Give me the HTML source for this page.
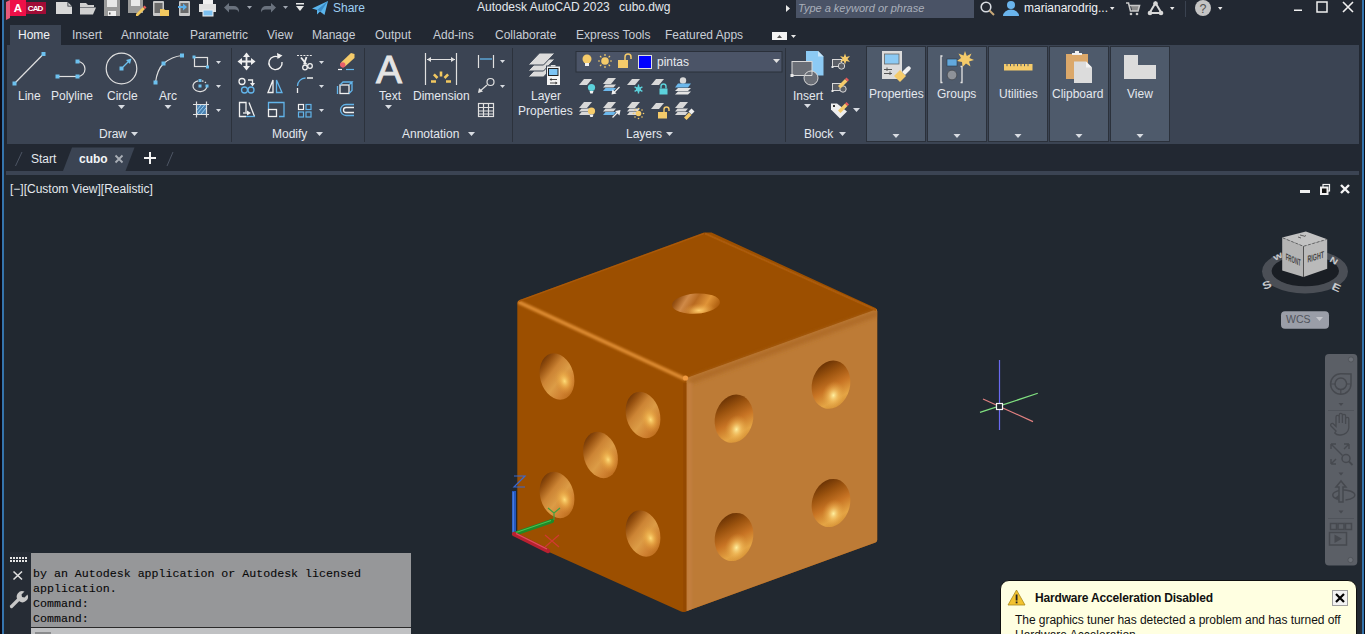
<!DOCTYPE html>
<html><head><meta charset="utf-8">
<style>
*{margin:0;padding:0;box-sizing:border-box}
html,body{width:1365px;height:634px;overflow:hidden;background:#212830;font-family:"Liberation Sans",sans-serif;color:#dfe3e8}
.a{position:absolute}
.t{position:absolute;white-space:pre;font-size:12px;line-height:14px;color:#e4e8ee}
.tab{color:#c9ced6}
svg{position:absolute;overflow:visible}
.mp{position:absolute;top:46px;width:60px;height:96px;background:#4e5a6b;border:1px solid #2b313b}
.tri{position:absolute;width:0;height:0;border-left:3.5px solid transparent;border-right:3.5px solid transparent;border-top:4px solid #d8dce2}
</style></head><body>
<!-- frame -->
<div class="a" style="left:0;top:0;width:1365px;height:175px;background:#222832"></div>
<div class="a" style="left:0;top:0;width:2px;height:634px;background:#0b0a14"></div>
<div class="a" style="left:2px;top:0;width:2px;height:634px;background:#3574ac"></div>
<div class="a" style="left:1360px;top:0;width:2px;height:634px;background:#262a33"></div>
<div class="a" style="left:1362px;top:0;width:2px;height:634px;background:#3574ac"></div>
<div class="a" style="left:1364px;top:0;width:1px;height:634px;background:#0b0a14"></div>

<!-- title bar -->
<div class="t" style="left:477px;top:0px">Autodesk AutoCAD 2023</div>
<div class="t" style="left:619px;top:0px">cubo.dwg</div>
<div class="t" style="left:333px;top:1px;color:#9fd0f4">Share</div>
<div class="a" style="left:796px;top:0;width:178px;height:18px;background:#4a5366"></div>
<div class="t" style="left:798px;top:1px;font-style:italic;color:#a9afba;font-size:11px">Type a keyword or phrase</div>
<div class="t" style="left:1024px;top:1px;color:#f0f2f5">marianarodrig...</div>


<!-- title bar icons -->
<svg width="1365" height="22" style="left:0;top:0">
  <!-- logo -->
  <polygon points="6,2 10,0 10,18 6,20" fill="#e8597a"/>
  <rect x="10" y="0" width="16" height="16" fill="#ee1048"/>
  <rect x="26" y="2" width="20" height="12" fill="#a00c36"/>
  <text x="13.8" y="12" font-family="Liberation Sans" font-weight="bold" font-size="11.5" fill="#fff">A</text>
  <text x="27.8" y="11" font-family="Liberation Sans" font-weight="bold" font-size="8" fill="#fff" textLength="15.5">CAD</text>
  <!-- new -->
  <path d="M56 2 h11.5 l4.5 4.5 v7.5 h-16z" fill="#d8d8d8"/>
  <path d="M67.5 2 v4.5 h4.5" fill="#222832"/>
  <path d="M68.3 2.8 l3 3 h-3z" fill="#d8d8d8"/>
  <!-- open -->
  <path d="M80 3 h6 l2 2 h6 v2 h-14z" fill="#d0d0d0"/>
  <path d="M80 7.5 h16 l-3 7 h-13z" fill="#d0d0d0"/>
  <!-- save -->
  <path d="M104 0 h16 v16 h-16z" fill="#9a9a9a"/>
  <rect x="107" y="0" width="10" height="7" fill="#e8e8e8"/>
  <rect x="108" y="11" width="8" height="5" fill="#f0f0f0"/>
  <rect x="109" y="12.5" width="1.5" height="2" fill="#555"/>
  <!-- save as -->
  <path d="M128 0 h15 v13 h-15z" fill="#9a9a9a"/>
  <rect x="131" y="0" width="9" height="6" fill="#e8e8e8"/>
  <path d="M136 14 l7 -7 l2 2 l-7 7 h-2z" fill="#f2c860"/>
  <path d="M143 7 l1.5 -1.5 l2 2 l-1.5 1.5z" fill="#e85a5a"/>
  <!-- open from mobile -->
  <rect x="153" y="1" width="11" height="15" rx="1" fill="#c8c8c8"/>
  <rect x="154.5" y="3" width="8" height="10" fill="#6a6a6a"/>
  <path d="M160 9 h4 l1 1 h4 v6 h-9z" fill="#f2c860"/>
  <!-- save to mobile -->
  <rect x="179" y="1" width="11" height="15" rx="1" fill="#c8c8c8"/>
  <rect x="180.5" y="3" width="8" height="10" fill="#6a6a6a"/>
  <path d="M178 6 h5 v-2.5 l4 3.5 l-4 3.5 v-2.5 h-5z" fill="#5ab0ec"/>
  <!-- print -->
  <rect x="203" y="0" width="10" height="4" fill="#f0f0f0"/>
  <rect x="199" y="4" width="17" height="8" fill="#e0e0e0"/>
  <rect x="203" y="10" width="10" height="6" fill="#7cc0f0" stroke="#f0f0f0" stroke-width="1"/>
  <!-- undo/redo -->
  <path d="M224 7.5 l5 -4.5 v3 h5 a5 5 0 0 1 5 5 v1.5 a4.5 4.5 0 0 0 -4.5 -3 h-5.5 v3z" fill="#6a727e"/>
  <path d="M276 7.5 l-5 -4.5 v3 h-5 a5 5 0 0 0 -5 5 v1.5 a4.5 4.5 0 0 1 4.5 -3 h5.5 v3z" fill="#6a727e"/>
  <polygon points="247,6 252,6 249.5,9" fill="#a0a6b0"/>
  <polygon points="283,6 288,6 285.5,9" fill="#a0a6b0"/>
  <rect x="296" y="3" width="8" height="1.5" fill="#e8e8e8"/>
  <polygon points="296,6 304,6 300,11" fill="#e8e8e8"/>
  <!-- share plane -->
  <path d="M312 8.5 l16 -7.5 l-3.5 14 l-4.5 -3.5 l-3 3 v-4.5z" fill="#5ab4ec"/>
  <path d="M317 10 l11 -9 l-7 10.5" fill="#3a8cc8"/>
  <!-- search arrow -->
  <polygon points="786,5 786,12 790,8.5" fill="#e8e8e8"/>
  <!-- search -->
  <circle cx="986" cy="7" r="4.8" fill="none" stroke="#d8dce2" stroke-width="1.6"/>
  <line x1="989.5" y1="10.5" x2="994" y2="15" stroke="#c8a878" stroke-width="2"/>
  <!-- person -->
  <circle cx="1011" cy="5" r="4" fill="#6ab4ec"/>
  <path d="M1003 16 a8 6.5 0 0 1 16 0z" fill="#6ab4ec"/>
  <polygon points="1110,7 1114.5,7 1112.2,10" fill="#e8e8e8"/>
  <!-- cart -->
  <path d="M1131 6 h8 l-1.5 5 h-5.5z" fill="#8a8a8a"/><path d="M1126 3 h2.5 l2 8 h7.5 l1.5 -5.5 h-10" fill="none" stroke="#c8c8c8" stroke-width="1.6"/>
  <circle cx="1131" cy="14" r="1.3" fill="#c8c8c8"/><circle cx="1137" cy="14" r="1.3" fill="#c8c8c8"/>
  <!-- autodesk A -->
  <path d="M1155.5 3 l-6 10 h12z" fill="none" stroke="#d8d8d8" stroke-width="2"/>
  <circle cx="1155.5" cy="3.5" r="2.3" fill="#d8d8d8"/><circle cx="1150" cy="13" r="2.3" fill="#d8d8d8"/><circle cx="1161" cy="13" r="2.3" fill="#d8d8d8"/>
  <polygon points="1170,7 1174.5,7 1172.2,10" fill="#e8e8e8"/>
  <line x1="1185.5" y1="1" x2="1185.5" y2="17" stroke="#3a4250" stroke-width="1"/>
  <!-- help -->
  <circle cx="1203" cy="8" r="8" fill="#c4c4c4"/>
  <text x="1199.5" y="12.8" font-family="Liberation Sans" font-size="12.5" fill="#505050">?</text>
  <polygon points="1218,7 1222.5,7 1220.2,10" fill="#e8e8e8"/>
  <!-- window buttons -->
  <rect x="1294" y="9.5" width="8" height="1.5" fill="#f0f0f0"/>
  <rect x="1317" y="2" width="10" height="10" fill="none" stroke="#f0f0f0" stroke-width="1.5"/>
  <path d="M1343 2 l10 10 M1353 2 l-10 10" stroke="#f0f0f0" stroke-width="1.6"/>
</svg>

<!-- ribbon tabs -->
<div class="a" style="left:10px;top:25px;width:51px;height:20px;background:#3b4453"></div>
<div class="t" style="left:18px;top:28px;color:#f2f4f7">Home</div>
<div class="t tab" style="left:72px;top:28px">Insert</div>
<div class="t tab" style="left:121px;top:28px">Annotate</div>
<div class="t tab" style="left:190px;top:28px">Parametric</div>
<div class="t tab" style="left:267px;top:28px">View</div>
<div class="t tab" style="left:312px;top:28px">Manage</div>
<div class="t tab" style="left:375px;top:28px">Output</div>
<div class="t tab" style="left:433px;top:28px">Add-ins</div>
<div class="t tab" style="left:495px;top:28px">Collaborate</div>
<div class="t tab" style="left:576px;top:28px">Express Tools</div>
<div class="t tab" style="left:665px;top:28px">Featured Apps</div>

<!-- ribbon panel bg -->
<div class="a" style="left:7px;top:45px;width:1352px;height:99px;background:#3b4453"></div>
<div class="a" style="left:772px;top:32px;width:15px;height:8px;background:#f4f4f4"></div>
<svg width="30" height="10" style="left:772px;top:32px"><polygon points="5,6 10,6 7.5,3" fill="#555"/><polygon points="19,3 24,3 21.5,6" fill="#e8e8e8"/></svg>
<div class="a" style="left:231px;top:48px;width:1px;height:94px;background:#2c323c"></div>
<div class="a" style="left:364px;top:48px;width:1px;height:94px;background:#2c323c"></div>
<div class="a" style="left:512px;top:48px;width:1px;height:94px;background:#2c323c"></div>
<div class="a" style="left:785px;top:48px;width:1px;height:94px;background:#2c323c"></div>

<!-- Draw panel labels -->
<div class="t" style="left:18px;top:89px">Line</div>
<div class="t" style="left:51px;top:89px">Polyline</div>
<div class="t" style="left:107px;top:89px">Circle</div>
<div class="t" style="left:159px;top:89px">Arc</div>
<div class="t" style="left:99px;top:127px">Draw</div>
<div class="t" style="left:272px;top:127px">Modify</div>
<div class="t" style="left:379px;top:89px">Text</div>
<div class="t" style="left:413px;top:89px">Dimension</div>
<div class="t" style="left:402px;top:127px">Annotation</div>
<div class="t" style="left:531px;top:89px">Layer</div>
<div class="t" style="left:518px;top:104px">Properties</div>
<div class="t" style="left:626px;top:127px">Layers</div>
<div class="t" style="left:793px;top:89px">Insert</div>
<div class="t" style="left:804px;top:127px">Block</div>

<!-- minimized panels -->
<div class="mp" style="left:866px"></div>
<div class="mp" style="left:927px"></div>
<div class="mp" style="left:988px"></div>
<div class="mp" style="left:1049px"></div>
<div class="mp" style="left:1110px"></div>
<div class="t" style="left:869px;top:87px">Properties</div>
<div class="t" style="left:937px;top:87px">Groups</div>
<div class="t" style="left:999px;top:87px">Utilities</div>
<div class="t" style="left:1052px;top:87px">Clipboard</div>
<div class="t" style="left:1127px;top:87px">View</div>


<!-- ribbon icons -->
<svg width="1365" height="150" style="left:0;top:0">
 <g fill="#6cc0ee">
  <!-- Line -->
  <line x1="14.5" y1="83.5" x2="43.5" y2="54" stroke="#e0e0e0" stroke-width="1.2"/>
  <rect x="12.5" y="81.5" width="4" height="4"/><rect x="41.5" y="52" width="4" height="4"/>
  <!-- Polyline -->
  <line x1="57.5" y1="76.5" x2="77.5" y2="76.5" stroke="#e0e0e0" stroke-width="1.2"/>
  <path d="M77.5 61.5 a7.5 7.5 0 0 1 0 15" fill="none" stroke="#e0e0e0" stroke-width="1.2"/>
  <rect x="55.5" y="74.5" width="4" height="4"/><rect x="75.5" y="74.5" width="4" height="4"/><rect x="75.5" y="59.5" width="4" height="4"/>
  <!-- Circle -->
  <circle cx="121.5" cy="68.5" r="15.3" fill="none" stroke="#e0e0e0" stroke-width="1.2"/>
  <rect x="119.5" y="66.5" width="4" height="4"/>
  <line x1="123" y1="67" x2="129.5" y2="60.5" stroke="#6cc0ee" stroke-width="1.3"/>
  <polygon points="131.5,58.5 126,60 130,64"/>
  <!-- Arc -->
  <path d="M155.5 82.5 Q157 70 163.5 63.5 Q172 56.5 182 55.5" fill="none" stroke="#e0e0e0" stroke-width="1.2"/>
  <rect x="153.5" y="80.5" width="4" height="4"/><rect x="161.5" y="61.5" width="4" height="4"/><rect x="180" y="53.5" width="4" height="4"/>
  <!-- rect -->
  <rect x="194.5" y="57.5" width="13" height="9" fill="none" stroke="#e0e0e0" stroke-width="1.2"/>
  <rect x="192.5" y="55.5" width="3" height="3"/><rect x="206" y="65.5" width="3" height="3"/>
  <!-- ellipse -->
  <path d="M198 80.8 A7 5.5 0 1 0 207 86" fill="none" stroke="#e0e0e0" stroke-width="1.2"/>
  <path d="M202 80.8 A7 5.5 0 0 1 206 83" fill="none" stroke="#e0e0e0" stroke-width="1.2" stroke-dasharray="1.5 1.5"/>
  <rect x="198.5" y="79" width="3" height="3"/><rect x="198.5" y="84.5" width="3" height="3"/><rect x="205.5" y="84.5" width="3" height="3"/>
  <!-- hatch -->
  <rect x="196.5" y="104.5" width="10" height="10" fill="#4a80b0"/>
  <path d="M197 110 l4 -5 M197 114 l8 -9.5 M201 114 l5 -6" stroke="#9ad0f0" stroke-width="1"/>
  <path d="M193 104.5 h16 M193 114.5 h16 M196.5 101.5 v16 M206.5 101.5 v16" stroke="#e0e0e0" stroke-width="1.2"/>
 </g>
 <g fill="#d8dce2">
  <polygon points="216,61 221,61 218.5,64"/><polygon points="216,85 221,85 218.5,88"/><polygon points="216,109 221,109 218.5,112"/>
  <polygon points="118,105 125,105 121.5,109"/><polygon points="164.5,105 171.5,105 168,109"/>
  <polygon points="131,132 138,132 134.5,136"/>
 </g>
 <!-- Modify icons -->
 <!-- move -->
 <path d="M246.5 55 v13 M240 61.5 h13" stroke="#f0f0f0" stroke-width="1.8"/>
 <g fill="#f0f0f0">
  <polygon points="246.5,52.5 243,57 250,57"/><polygon points="246.5,70.5 243,66 250,66"/>
  <polygon points="237.5,61.5 242,58 242,65"/><polygon points="255.5,61.5 251,58 251,65"/>
 </g>
 <!-- rotate -->
 <path d="M279.5 57.8 A6.6 6.6 0 1 0 282 62" fill="none" stroke="#f0f0f0" stroke-width="1.4"/>
 <polygon points="282.5,55.5 277,53 277.5,59" fill="#f0f0f0"/>
 <!-- copy -->
 <circle cx="242" cy="81.5" r="3" fill="none" stroke="#f0f0f0" stroke-width="1.3"/>
 <path d="M248 80 h4.5 v3" fill="none" stroke="#f0f0f0" stroke-width="1.3"/>
 <polygon points="250,83 255,83 252.5,86.5" fill="#f0f0f0"/>
 <circle cx="244.5" cy="90" r="3" fill="none" stroke="#62b4ea" stroke-width="1.3"/>
 <circle cx="251" cy="90" r="3" fill="none" stroke="#62b4ea" stroke-width="1.3"/>
 <!-- mirror -->
 <path d="M268 92.5 l5 -12.5 v12.5z" fill="none" stroke="#f0f0f0" stroke-width="1.3" stroke-linejoin="miter"/>
 <path d="M276.5 80 l5.5 12.5 h-5.5z" fill="none" stroke="#62b4ea" stroke-width="1.3"/>
 <!-- stretch -->
 <path d="M246 116.5 h-6.5 v-14 h6.5 v10" fill="none" stroke="#f0f0f0" stroke-width="1.3"/>
 <path d="M249 102.5 l5.5 14" fill="none" stroke="#f0f0f0" stroke-width="1.3"/>
 <path d="M246 116.5 h9" stroke="#62b4ea" stroke-width="1.3"/>
 <path d="M243 113 h5" stroke="#f0f0f0" stroke-width="1.3"/>
 <polygon points="251,113 247,110.5 247,115.5" fill="#f0f0f0"/>
 <!-- scale -->
 <path d="M268.5 109 v-6.5 h15.5 v14 h-5" fill="none" stroke="#62b4ea" stroke-width="1.3"/>
 <rect x="268.5" y="109.5" width="8" height="7" fill="none" stroke="#f0f0f0" stroke-width="1.3"/>
 <!-- trim -->
 <path d="M297 55.5 h16" stroke="#e8e8e8" stroke-width="1.2" stroke-dasharray="2 1.2"/>
 <path d="M301 57.5 l5.5 7 M306.5 57 l-2.5 7.5" stroke="#f0f0f0" stroke-width="1.8"/>
 <circle cx="305" cy="67.5" r="2.3" fill="none" stroke="#f0f0f0" stroke-width="1.3"/>
 <circle cx="310" cy="66" r="2.3" fill="none" stroke="#f0f0f0" stroke-width="1.3"/>
 <!-- erase -->
 <path d="M341 62.5 l10 -9.5 l3.5 1 v4 l-9.5 8.5z" fill="#f5cb6a"/>
 <path d="M341 62.5 l4 4 a2.8 2.8 0 0 1 -4 -4z" fill="#e8606a"/>
 <circle cx="342.8" cy="64.8" r="2.6" fill="#e8606a"/>
 <path d="M338 69.5 h4" stroke="#f0f0f0" stroke-width="1.2"/>
 <path d="M346 69.5 h8" stroke="#62b4ea" stroke-width="1.2"/>
 <!-- fillet -->
 <path d="M297.5 86 a8 8 0 0 1 8 -8" fill="none" stroke="#62b4ea" stroke-width="1.3"/>
 <path d="M307 78 h6 M297.5 88 v5" stroke="#f0f0f0" stroke-width="1.3"/>
 <!-- explode cube -->
 <rect x="340" y="85" width="9" height="8.5" fill="none" stroke="#f0f0f0" stroke-width="1.3"/>
 <path d="M337.5 86 v8 M340 85 l3 -3 h9 l-3 3 M352 82 v8.5 l-3 3" fill="none" stroke="#62b4ea" stroke-width="1.3"/>
 <!-- array -->
 <rect x="298.5" y="104.5" width="5" height="5" fill="none" stroke="#f0f0f0" stroke-width="1.2"/>
 <g fill="none" stroke="#62b4ea" stroke-width="1.2">
  <rect x="306" y="104.5" width="5" height="5"/><rect x="298.5" y="112" width="5" height="5"/><rect x="306" y="112" width="5" height="5"/>
 </g>
 <!-- offset -->
 <path d="M354 104.5 h-8 a5.5 5.5 0 0 0 0 11 h8" fill="none" stroke="#62b4ea" stroke-width="1.3"/>
 <path d="M354 107.5 h-8 a2.5 2.5 0 0 0 0 5 h8" fill="none" stroke="#f0f0f0" stroke-width="1.3"/>
 <g fill="#d8dce2">
  <polygon points="319,61 324,61 321.5,64"/><polygon points="319,85 324,85 321.5,88"/><polygon points="319,109 324,109 321.5,112"/>
  <polygon points="316,132 323,132 319.5,136"/>
 </g>
 <!-- Annotation -->
 <text x="376" y="83" font-family="Liberation Sans" font-size="38" fill="#e4e4e4" stroke="#e4e4e4" stroke-width="1" textLength="26" lengthAdjust="spacingAndGlyphs">A</text>
 <g stroke="#e0e0e0" stroke-width="1.2" fill="none">
  <path d="M425.5 53 v32 M456.5 53 v32 M427 59.5 h28"/>
  <path d="M478.5 55 v13 M493.5 55 v13"/>
  <path d="M479 92 l8 -7"/>
  <circle cx="490.5" cy="82" r="3.5"/>
  <rect x="478.5" y="103.5" width="15" height="13"/>
  <path d="M478.5 107.5 h15 M478.5 111 h15 M478.5 114 h15 M483.5 103.5 v13 M488.5 103.5 v13"/>
 </g>
 <polygon points="427,59.5 431,57 431,62" fill="#e0e0e0"/><polygon points="455,59.5 451,57 451,62" fill="#e0e0e0"/>
 <polygon points="478,93 479,88 483,91.5" fill="#e0e0e0"/>
 <path d="M480 59 h12" stroke="#62b4ea" stroke-width="1.3"/>
 <path d="M436.0 81.5 L431.0 81.5 M437.5 78.0 L433.9 74.4 M441.0 76.5 L441.0 71.5 M444.5 78.0 L448.1 74.4 M446.0 81.5 L451.0 81.5" stroke="#f2c860" stroke-width="2.6" stroke-linecap="butt" fill="none"/>
 <g fill="#d8dce2">
  <polygon points="385,105 392,105 388.5,109"/>
  <polygon points="500,60 505,60 502.5,63"/><polygon points="500,85 505,85 502.5,88"/>
  <polygon points="468,132 475,132 471.5,136"/>
 </g>
 <!-- Layers -->
 <g fill="#dcdcdc" stroke="#3b4453" stroke-width="1">
  <polygon points="528,77 539.5,65 555,65 543.5,77"/>
  <polygon points="528,71 539.5,59 555,59 543.5,71"/>
  <polygon points="528,65 539.5,53 555,53 543.5,65"/>
 </g>
 <rect x="546.5" y="66" width="14" height="19.5" fill="#f4f4f4" stroke="#3b4453" stroke-width="1"/>
 <rect x="551" y="65" width="4.5" height="1.5" fill="#e0e0e0"/>
 <rect x="548.5" y="68.5" width="9.5" height="7" fill="#7cc4f4" stroke="#222" stroke-width="1"/>
 <path d="M550.5 79.5 h6.5 M550 83 h6.5" stroke="#333" stroke-width="0.9"/>
 <polygon points="549.5,79.5 551.5,78 551.5,81" fill="#333"/><polygon points="557.5,83 555.5,81.5 555.5,84.5" fill="#333"/>
 <!-- layer dropdown -->
 <rect x="576" y="51.5" width="206" height="20.5" fill="#4b5467" stroke="#2a303a" stroke-width="1"/>
 <circle cx="587" cy="59" r="4.5" fill="#f5cb6a"/><rect x="585" y="63" width="4" height="3" fill="#f0f0f0"/>
 <circle cx="605" cy="61" r="3.8" fill="#f5cb6a"/>
 <path d="M605 54 v2 M605 66 v2 M598 61 h2 M610 61 h2 M600 56 l1.4 1.4 M608.6 64.6 l1.4 1.4 M610 56 l-1.4 1.4 M601.4 64.6 l-1.4 1.4" stroke="#f5cb6a" stroke-width="1.2"/>
 <rect x="618" y="60" width="10" height="8" fill="#f5cb6a"/>
 <path d="M625 60 v-3 a3 3 0 0 1 6 0 v2" fill="none" stroke="#f5cb6a" stroke-width="1.5"/>
 <rect x="638.5" y="55.5" width="13" height="13" fill="#0000ff" stroke="#e0e0e0" stroke-width="1"/>
 <polygon points="773,59 780,59 776.5,63" fill="#e0e0e0"/>
 <polygon points="579,85 584,79 592,79 587,85" fill="#d8d8d8"/>
 <circle cx="591.5" cy="87.5" r="3.6" fill="#5cd2dc"/><path d="M589.5 91 h4 l-0.8 2.5 h-2.4z" fill="#f0f0f0"/>
 <polygon points="603,84 608,78 616,78 611,84" fill="#d8d8d8"/><polygon points="603,87.5 605.5,84.5 616,84.5 613.5,87.5" fill="#d8d8d8" transform="translate(0 0)"/><polygon points="603,91 605.5,88 616,88 613.5,91" fill="#6cb8ec"/>
 <path d="M619.5 87 l-6 6" stroke="#f0f0f0" stroke-width="1.3"/><polygon points="611.5,94.5 612.5,89.5 616.5,93.5" fill="#f0f0f0"/>
 <polygon points="627,85 632,79 640,79 635,85" fill="#d8d8d8"/>
 <g stroke="#5cd2dc" stroke-width="1.4"><path d="M638.5 84.5 v9 M634.6 86.8 l7.8 4.5 M642.4 86.8 l-7.8 4.5"/></g><circle cx="638.5" cy="89" r="2" fill="none" stroke="#5cd2dc" stroke-width="1.2"/>
 <polygon points="651,85 656,79 664,79 659,85" fill="#d8d8d8"/>
 <rect x="659.5" y="88.5" width="8" height="6" fill="#5cd2dc"/><path d="M661 88.5 v-2 a2.5 2.5 0 0 1 5 0 v2" fill="none" stroke="#5cd2dc" stroke-width="1.4"/>
 <circle cx="683" cy="80.5" r="3.2" fill="#d8d8d8"/>
 <polygon points="675,87.5 678,83.5 691,83.5 688,87.5" fill="#6cb8ec"/><polygon points="675,91 678,88 691,88 688,91" fill="#e4e4e4"/><polygon points="675,94.5 678,91.5 691,91.5 688,94.5" fill="#e4e4e4"/>
 <polygon points="579,108 584,102 592,102 587,108" fill="#d8d8d8"/><polygon points="579,111.5 581.5,108.5 592,108.5 589.5,111.5" fill="#d8d8d8" transform="translate(0 0)"/><polygon points="579,115 581.5,112 592,112 589.5,115" fill="#d8d8d8"/>
 <circle cx="591.5" cy="111" r="3.6" fill="#f5cb6a"/><path d="M589.5 114.5 h4 l-0.8 2.5 h-2.4z" fill="#f0f0f0"/>
 <polygon points="603,108 608,102 616,102 611,108" fill="#d8d8d8"/><polygon points="603,111.5 605.5,108.5 616,108.5 613.5,111.5" fill="#d8d8d8" transform="translate(0 0)"/><polygon points="603,115 605.5,112 616,112 613.5,115" fill="#6cb8ec"/>
 <path d="M612.5 117.5 l6 -6" stroke="#f0f0f0" stroke-width="1.3"/><polygon points="620.5,110 615,111 619.5,115.5" fill="#f0f0f0"/>
 <polygon points="627,108 632,102 640,102 635,108" fill="#d8d8d8"/><polygon points="627,111.5 629.5,108.5 640,108.5 637.5,111.5" fill="#d8d8d8" transform="translate(0 0)"/><polygon points="627,115 629.5,112 640,112 637.5,115" fill="#d8d8d8"/>
 <circle cx="638.5" cy="113.5" r="2.8" fill="#f5cb6a"/><g fill="#f5cb6a"><circle cx="638.5" cy="108.5" r=".8"/><circle cx="638.5" cy="118.5" r=".8"/><circle cx="633.5" cy="113.5" r=".8"/><circle cx="643.5" cy="113.5" r=".8"/><circle cx="635" cy="110" r=".8"/><circle cx="642" cy="117" r=".8"/><circle cx="642" cy="110" r=".8"/><circle cx="635" cy="117" r=".8"/></g>
 <polygon points="651,109 656,103 664,103 659,109" fill="#d8d8d8"/>
 <rect x="658" y="112" width="9" height="6.5" fill="#f5cb6a"/><path d="M664 112 v-2.5 a2.5 2.5 0 0 1 5 0 v1.5" fill="none" stroke="#f5cb6a" stroke-width="1.4"/>
 <polygon points="675,108 680,102 688,102 683,108" fill="#d8d8d8"/><polygon points="675,111.5 677.5,108.5 688,108.5 685.5,111.5" fill="#d8d8d8" transform="translate(0 0)"/><polygon points="675,115 677.5,112 688,112 685.5,115" fill="#d8d8d8"/>
 <path d="M684 117.5 l5 -5 l2.5 2.5 l-5 5z" fill="#f5cb6a"/><path d="M688.5 111.5 l3 -3 l3 3 l-3 3z" fill="#f0f0f0"/>
 <polygon points="666,132 673,132 669.5,136" fill="#d8dce2"/>
 <!-- Block -->
 <path d="M806 51 h12 l5.5 5.5 v19 h-17.5z" fill="#8ccaf4"/>
 <path d="M818 51 v5.5 h5.5z" fill="#c8e6fa"/>
 <rect x="792" y="61.5" width="20" height="14" fill="#6a6e76" stroke="#d8d8d8" stroke-width="1"/>
 <circle cx="811" cy="78" r="7" fill="#6a6e76" stroke="#d8d8d8" stroke-width="1"/>
 <path d="M805 75.5 h7 v-5" fill="none" stroke="#d8d8d8" stroke-width="1"/>
 <rect x="790.5" y="74" width="3" height="3" fill="#e8e8e8"/>
 <g stroke="#d8d8d8" stroke-width="1">
  <rect x="832.5" y="59.5" width="9" height="7" fill="#5a5e66"/><circle cx="841.5" cy="66" r="3.2" fill="#5a5e66"/>
  <rect x="832.5" y="83.5" width="9" height="7" fill="#5a5e66"/><circle cx="843" cy="89" r="3.2" fill="#5a5e66"/>
 </g>
 <rect x="831.5" y="66" width="2" height="2" fill="#e8e8e8"/><rect x="831.5" y="90" width="2" height="2" fill="#e8e8e8"/>
 <polygon points="845,53.5 846.3,57 850,56 847.5,59 850,62 846.3,61 845,64.5 843.7,61 840,62 842.5,59 840,56 843.7,57" fill="#f5cb6a"/>
 <path d="M838 86 l7 -7 l2.5 2.5 l-7 7z" fill="#f5cb6a"/><path d="M845 79 l1.5 -1.5 l2.5 2.5 l-1.5 1.5z" fill="#e85a5a"/>
 <path d="M831 103.5 h6 l10 8 l-7 7 l-9 -9z" fill="#eeeeee"/>
 <rect x="833" y="105" width="2" height="2" fill="#333"/>
 <path d="M838 110.5 l7 -7 l2.5 2.5 l-7 7z" fill="#f5cb6a"/><path d="M845 103.5 l1.5 -1.5 l2.5 2.5 l-1.5 1.5z" fill="#e85a5a"/>
 <g fill="#d8dce2">
  <polygon points="804,104 811,104 807.5,108"/>
  <polygon points="853,108 860,108 856.5,112"/>
  <polygon points="839,132 846,132 842.5,136"/>
  <polygon points="892.5,134 899.5,134 896,138"/>
  <polygon points="953.5,134 960.5,134 957,138"/>
  <polygon points="1014.5,134 1021.5,134 1018,138"/>
  <polygon points="1075.5,134 1082.5,134 1079,138"/>
  <polygon points="1136.5,134 1143.5,134 1140,138"/>
 </g>
 <!-- minimized panel icons -->
 <rect x="882" y="51" width="20" height="28" fill="#dcdcdc"/>
 <rect x="884.5" y="54" width="14.5" height="10" fill="#8ccaf4" stroke="#666" stroke-width="0.8"/>
 <path d="M884 69.5 h8 M884 73.5 h8" stroke="#555" stroke-width="1"/>
 <path d="M887 67.5 v3.5 M890 71.5 v3.5" stroke="#555" stroke-width="1"/>
 <path d="M894 76 l6 -6 l6 6 l-6 6z" fill="#f5cb6a"/>
 <path d="M902 72 l5 -5 l2 -1 l2 2 l-1 2 l-5 5z" fill="#f0f0f0"/>
 <path d="M942.5 56 h-1.5 v26.5 h1.5 M960.5 66.5 h1.5 v16 h-1.5" fill="none" stroke="#e4e4e4" stroke-width="1.3"/>
 <rect x="947" y="59" width="10" height="7" fill="#62a8dc" stroke="#2a3a4a" stroke-width="0.6"/>
 <circle cx="952" cy="75" r="4.8" fill="#8e9298" stroke="#333" stroke-width="0.5"/>
 <polygon points="965,51 966.8,56 971.5,53.5 969.5,58 974,60 969,61.5 970.5,66.5 966,63.5 962.5,67 962,62 957,61 961,58 958.5,53.5 963.5,55.5" fill="#f5cb6a"/>
 <rect x="1004" y="64" width="28.5" height="6.5" fill="#f5cb6a"/>
 <path d="M1007 64 v2.2 M1010.5 64 v2.2 M1014 64 v2.2 M1017.5 64 v2.2 M1021 64 v2.2 M1024.5 64 v2.2 M1028 64 v2.2" stroke="#4e5a6b" stroke-width="1"/>
 <rect x="1066" y="54" width="22" height="25" fill="#dba86a"/>
 <path d="M1072 55 h10 v-2 h-3 v-2 h-4 v2 h-3z" fill="#f0f0f0"/>
 <path d="M1074 61.5 h12 l6 6 v15.5 h-18z" fill="#dcdcdc"/>
 <path d="M1086 61.5 v6 h6z" fill="#f4f4f4"/>
 <path d="M1124 55 h14 v10 h18 v14 h-32z" fill="#dcdcdc"/>
</svg>

<div class="t" style="left:657px;top:55px;color:#e8eaee">pintas</div>
<!-- file tabs -->
<div class="t" style="left:31px;top:152px">Start</div>
<svg width="1365" height="30" style="left:0;top:145px">
  <polygon points="63,26 72,2.5 134.5,2.5 125.5,26" fill="#3b4453"/>
  <line x1="15.5" y1="21" x2="22" y2="7" stroke="#4d5564" stroke-width="1"/>
  <line x1="167" y1="21" x2="173" y2="7" stroke="#4d5564" stroke-width="1"/>
</svg>
<div class="t" style="left:79px;top:152px;font-weight:bold;color:#f3f5f8">cubo</div>
<svg width="200" height="30" style="left:0;top:145px">
  <path d="M115.5 10.5 l7 7 M122.5 10.5 l-7 7" stroke="#a9aeb6" stroke-width="1.8"/>
  <path d="M150 7 v12 M144 13 h12" stroke="#f4f4f4" stroke-width="2"/>
</svg>
<div class="a" style="left:6px;top:171px;width:1353px;height:4px;background:#3b4453"></div>

<!-- viewport -->
<div class="t" style="left:10px;top:182px">[−][Custom View][Realistic]</div>


<!-- cube -->
<svg width="1365" height="634" style="left:0;top:0">
<defs>
  <filter id="b1" x="-10%" y="-10%" width="120%" height="120%"><feGaussianBlur stdDeviation="2.2"/></filter>
  <filter id="b3" x="-10%" y="-10%" width="120%" height="120%"><feGaussianBlur stdDeviation="1"/></filter>
  <filter id="b2" x="-10%" y="-10%" width="120%" height="120%"><feGaussianBlur stdDeviation="0.6"/></filter>
  <linearGradient id="hlL" x1="0.25" y1="0.02" x2="0.75" y2="0.98">
    <stop offset="0" stop-color="#6a3204"/>
    <stop offset="0.16" stop-color="#985210"/>
    <stop offset="0.36" stop-color="#cc8434"/>
    <stop offset="0.58" stop-color="#dc9c46"/>
    <stop offset="0.8" stop-color="#d08232"/>
    <stop offset="1" stop-color="#bc6c1c"/>
  </linearGradient>
  <radialGradient id="hlR" cx="0.68" cy="0.64" r="0.3">
    <stop offset="0" stop-color="#ffdc78" stop-opacity="1"/>
    <stop offset="0.5" stop-color="#f0b048" stop-opacity=".5"/>
    <stop offset="1" stop-color="#d88c32" stop-opacity="0"/>
  </radialGradient>
  <linearGradient id="hrL" x1="0.1" y1="0.05" x2="0.8" y2="1">
    <stop offset="0" stop-color="#5a2800"/>
    <stop offset="0.3" stop-color="#9a520e"/>
    <stop offset="0.55" stop-color="#c87424"/>
    <stop offset="0.8" stop-color="#e4a444"/>
    <stop offset="1" stop-color="#d08a30"/>
  </linearGradient>
  <radialGradient id="hrR" cx="0.63" cy="0.7" r="0.3">
    <stop offset="0" stop-color="#fff0a0" stop-opacity="1"/>
    <stop offset="0.45" stop-color="#f4c060" stop-opacity=".6"/>
    <stop offset="1" stop-color="#dc9a3c" stop-opacity="0"/>
  </radialGradient>
  <linearGradient id="htL" x1="0" y1="0.2" x2="1" y2="0.5">
    <stop offset="0" stop-color="#7a3c08"/>
    <stop offset="0.12" stop-color="#9a5416"/>
    <stop offset="0.3" stop-color="#d08a48"/>
    <stop offset="0.5" stop-color="#b86a20"/>
    <stop offset="0.75" stop-color="#e09438"/>
    <stop offset="1" stop-color="#b06010"/>
  </linearGradient>
  <radialGradient id="htR" cx="0.55" cy="0.85" r="0.35">
    <stop offset="0" stop-color="#ffd070" stop-opacity="1"/>
    <stop offset="1" stop-color="#e09438" stop-opacity="0"/>
  </radialGradient>
</defs>
<clipPath id="cc"><path d="M704 232.5 L711.5 232.5 L875.5 308 Q877.2 309 877.2 311 L877.2 540 Q877.2 541.8 875.5 542.4 L685.5 611.5 Q683 612.4 680.5 611.3 L519 538.5 Q517.3 537.6 517.3 535.5 L517.3 303 Q517.3 300.8 519.5 300 Z"/></clipPath>
<g clip-path="url(#cc)">
<rect x="510" y="225" width="375" height="395" fill="#9c4f00"/>
<polygon points="686.5,378 877.2,309 880,309 880,545 686.5,615" fill="#bd7b36"/>
<g filter="url(#b1)">
  <line x1="690" y1="381" x2="878" y2="313" stroke="#ae6a26" stroke-width="6"/>
</g>
<g filter="url(#b3)">
  <line x1="689.5" y1="383" x2="689.5" y2="612" stroke="#c48040" stroke-width="4"/>
  <line x1="519.5" y1="302.5" x2="684" y2="378.5" stroke="#dc8a30" stroke-width="3.8" stroke-linecap="round"/>
</g>
<g filter="url(#b2)">
  <line x1="684.8" y1="383" x2="684.8" y2="612" stroke="#944800" stroke-width="3"/>
  <line x1="705" y1="233.5" x2="876" y2="310" stroke="#aa5a08" stroke-width="2"/>
  <line x1="519" y1="301" x2="704" y2="233.5" stroke="#a85808" stroke-width="1.5"/>
</g>
<circle cx="685.5" cy="378" r="2.6" fill="#f09a40" filter="url(#b2)"/>
</g>
<!-- holes -->
<g transform="translate(557 376.5) rotate(-16)"><ellipse rx="16.8" ry="23.6" fill="url(#hlL)"/><ellipse rx="16.8" ry="23.6" fill="url(#hlR)"/></g>
<g transform="translate(643 415) rotate(-16)"><ellipse rx="16.8" ry="23.6" fill="url(#hlL)"/><ellipse rx="16.8" ry="23.6" fill="url(#hlR)"/></g>
<g transform="translate(600.5 455) rotate(-16)"><ellipse rx="16.8" ry="23.6" fill="url(#hlL)"/><ellipse rx="16.8" ry="23.6" fill="url(#hlR)"/></g>
<g transform="translate(557 495) rotate(-16)"><ellipse rx="16.8" ry="23.6" fill="url(#hlL)"/><ellipse rx="16.8" ry="23.6" fill="url(#hlR)"/></g>
<g transform="translate(643 533.5) rotate(-16)"><ellipse rx="16.8" ry="23.6" fill="url(#hlL)"/><ellipse rx="16.8" ry="23.6" fill="url(#hlR)"/></g>
<g transform="translate(734 418.7) rotate(14)"><ellipse rx="19" ry="24.4" fill="url(#hrL)"/><ellipse rx="19" ry="24.4" fill="url(#hrR)"/></g>
<g transform="translate(831 384.7) rotate(14)"><ellipse rx="19" ry="24.4" fill="url(#hrL)"/><ellipse rx="19" ry="24.4" fill="url(#hrR)"/></g>
<g transform="translate(734 537) rotate(14)"><ellipse rx="19" ry="24.4" fill="url(#hrL)"/><ellipse rx="19" ry="24.4" fill="url(#hrR)"/></g>
<g transform="translate(831 503) rotate(14)"><ellipse rx="19" ry="24.4" fill="url(#hrL)"/><ellipse rx="19" ry="24.4" fill="url(#hrR)"/></g>
<g transform="translate(696 303.6) rotate(-4)"><ellipse rx="24" ry="10" fill="url(#htL)"/><ellipse rx="24" ry="10" fill="url(#htR)"/></g>
<!-- UCS icon -->
<line x1="514" y1="534" x2="514" y2="491" stroke="#2456c0" stroke-width="4"/>
<line x1="513.3" y1="532" x2="513.3" y2="492" stroke="#4a80e0" stroke-width="1.2"/>
<line x1="514" y1="534" x2="552" y2="521" stroke="#1e8a28" stroke-width="4.2" stroke-linecap="round"/>
<line x1="516" y1="532.5" x2="551" y2="520.5" stroke="#48c050" stroke-width="1.2"/>
<line x1="514" y1="534" x2="548" y2="551" stroke="#b82030" stroke-width="4.2" stroke-linecap="round"/>
<line x1="516" y1="533.5" x2="547" y2="549" stroke="#e05060" stroke-width="1.2"/>
<path d="M514 476 h11 l-11 11 h11" fill="none" stroke="#3a68d0" stroke-width="1.2"/>
<path d="M548 508 l6 5 l6 -5 M554 513 v7" fill="none" stroke="#3ea040" stroke-width="1.2"/>
<path d="M545 535 l14 12 M559 535 l-14 12" fill="none" stroke="#d03a30" stroke-width="1.2"/>
</svg>


<!-- viewport widgets -->
<svg width="1365" height="634" style="left:0;top:0">
 <!-- viewport window buttons -->
 <rect x="1300" y="190" width="10" height="3" fill="#f0f0f0"/>
 <rect x="1323" y="184.5" width="6.5" height="6.5" fill="none" stroke="#f0f0f0" stroke-width="1.2"/>
 <rect x="1321" y="187.5" width="6.5" height="6.5" fill="#111" stroke="#f0f0f0" stroke-width="2"/>
 <path d="M1341 185 l8 8 M1349 185 l-8 8" stroke="#f4f4f4" stroke-width="2.4"/>
 <!-- crosshair -->
 <line x1="999.5" y1="360" x2="999.5" y2="430" stroke="#6a6af0" stroke-width="1.2"/>
 <line x1="980" y1="412.4" x2="1037.8" y2="393.3" stroke="#80e080" stroke-width="1.2"/>
 <line x1="983" y1="399" x2="1033" y2="421.6" stroke="#e08080" stroke-width="1.2"/>
 <rect x="996.5" y="403.5" width="6" height="6" fill="#222831" stroke="#f4f4f4" stroke-width="1.2"/>
 <!-- viewcube ring -->
 <ellipse cx="1305" cy="271.5" rx="43" ry="22" fill="#4b4f56"/>
 <ellipse cx="1305.3" cy="271" rx="33.7" ry="15.3" fill="#1a1e24"/>
 <g font-family="Liberation Sans" font-weight="bold" fill="#c8cacd">
  <text font-size="13" transform="translate(1264 290) rotate(-22) scale(1.05 .8)">S</text>
  <text font-size="13" transform="translate(1331 289) rotate(24) scale(1 .8)">E</text>
  <text font-size="11" transform="translate(1329 261) rotate(32) scale(1 .75)">N</text>
  <text font-size="10" transform="translate(1275 261) rotate(-28) scale(1 .7)">W</text>
 </g>
 <!-- viewcube -->
 <polygon points="1305.9,231.5 1327.2,239.2 1303.5,246.3 1282.2,237.4" fill="#c2c2c2"/>
 <polygon points="1282.2,237.4 1303.5,246.3 1303.5,277 1282.2,270.6" fill="#b4b4b4"/>
 <polygon points="1303.5,246.3 1327.2,239.2 1327.2,268.8 1303.5,277" fill="#bababa"/>
 <line x1="1303.5" y1="246.3" x2="1303.5" y2="277" stroke="#4a4a4a" stroke-width="0.9"/>
 <path d="M1283 238 L1303.5 246.3 L1326.5 239.5" fill="none" stroke="#555" stroke-width="0.8" stroke-dasharray="2.5 2"/>
 <path d="M1298 237 l3 1 M1304 236.5 l2 -1 M1300 235 l4 1" stroke="#555" stroke-width="0.9"/>
 <g font-family="Liberation Sans" font-size="9.5" font-weight="bold" fill="#454545">
  <text transform="translate(1282.2 237.4) skewY(22.7)" x="3.5" y="21" textLength="15" lengthAdjust="spacingAndGlyphs">FRONT</text>
  <text transform="translate(1303.5 246.3) skewY(-16.7)" x="4" y="17.5" textLength="16.5" lengthAdjust="spacingAndGlyphs">RIGHT</text>
 </g>
 <!-- WCS -->
 <rect x="1281" y="311.3" width="48" height="17.4" rx="4" fill="#9a9ea8"/>
 <text x="1286" y="323" font-family="Liberation Sans" font-size="10.5" fill="#50545c">WCS</text>
 <polygon points="1316,317 1323,317 1319.5,321" fill="#c4c6cc"/>
 <!-- nav bar -->
 <rect x="1325" y="354" width="32.3" height="211.6" rx="4" fill="#5b5f66"/>
 <circle cx="1351" cy="359.5" r="2.6" fill="#6c7077" stroke="#4c5056" stroke-width="0.8"/>
 <circle cx="1350.5" cy="560" r="2.6" fill="#6c7077" stroke="#4c5056" stroke-width="0.8"/>
 <g fill="none" stroke="#46494f" stroke-width="1.5">
  <path d="M1351 374 v10 a10.2 10.2 0 1 1 -10.2 -10.2z"/>
  <circle cx="1340.8" cy="383.8" r="5.8"/>
  <path d="M1331 384 h4.5 M1346 384 h4.5 M1340.8 389.6 v4.5" stroke-width="1.2"/>
  <path d="M1328 410.5 h26 M1328 518.5 h26" stroke="#50545b" stroke-width="1"/>
  <path d="M1336 431 l-5 -5 a1.5 1.5 0 0 1 2.5 -2 l2.5 2.5 v-9.5 a1.6 1.6 0 0 1 3.2 0 v6 v-8 a1.6 1.6 0 0 1 3.2 0 v8 v-7 a1.6 1.6 0 0 1 3.2 0 v8 v-5 a1.6 1.6 0 0 1 3.2 0 v9 a8 8 0 0 1 -8 7 h-1.5 a6 6 0 0 1 -4.5 -2z" stroke-width="1.3"/>
  <path d="M1331 444 l11.5 11.5 M1331 444 v5 M1331 444 h5 M1349 444 l-5 5 M1349 444 h-5 M1349 444 v5 M1331 464 l5 -5 M1331 464 h5 M1331 464 v-5" stroke-width="1.4"/>
  <circle cx="1346" cy="458.5" r="4"/><path d="M1349 461.5 l3.5 3.5" stroke-width="1.8"/>
  <path d="M1337 499 a11 5 0 1 1 8.5 1"/>
  <path d="M1339 502 v-15 h-3 l5 -6 l5 6 h-3 v15z" fill="#5b5f66"/>
  <rect x="1330.5" y="523.5" width="6" height="6"/><rect x="1338" y="523.5" width="6" height="6"/><rect x="1345.5" y="523.5" width="6" height="6"/>
  <rect x="1329.5" y="532.5" width="17" height="12.5"/>
 </g>
 <polygon points="1335,498 1339,494.5 1339,501" fill="#46494f"/>
 <polygon points="1334.5,534.5 1334.5,543 1342,538.7" fill="#46494f"/>
 <g fill="#46494f">
  <polygon points="1338.5,403 1343.5,403 1341,406"/>
  <polygon points="1338.5,472.5 1343.5,472.5 1341,475.5"/>
  <polygon points="1338.5,510.5 1343.5,510.5 1341,513.5"/>
 </g>
</svg>

<!-- command line -->
<div class="a" style="left:10px;top:552px;width:21px;height:82px;background:#262c35"></div>
<div class="a" style="left:31px;top:553px;width:380px;height:74px;background:#969799"></div>
<div class="a" style="left:31px;top:627px;width:380px;height:1px;background:#2a2a2a"></div>
<div class="a" style="left:31px;top:628px;width:380px;height:6px;background:#c0c1c3"></div>
<div class="a" style="left:35px;top:632px;width:16px;height:2px;background:#8a8b8d"></div>
<div class="a" style="left:33px;top:566px;font-family:'Liberation Mono',monospace;font-size:11.63px;line-height:15px;color:#080808;white-space:pre;-webkit-text-stroke:0.1px #080808">by an Autodesk application or Autodesk licensed
application.
Command:
Command:</div>
<svg width="40" height="80" style="left:0;top:552px">
 <g fill="#e4e4e4">
  <rect x="10" y="5" width="2" height="2"/><rect x="13" y="5" width="2" height="2"/><rect x="16" y="5" width="2" height="2"/><rect x="19" y="5" width="2" height="2"/><rect x="22" y="5" width="2" height="2"/><rect x="25" y="5" width="2" height="2"/>
  <rect x="10" y="8" width="2" height="2"/><rect x="13" y="8" width="2" height="2"/><rect x="16" y="8" width="2" height="2"/><rect x="19" y="8" width="2" height="2"/><rect x="22" y="8" width="2" height="2"/><rect x="25" y="8" width="2" height="2"/>
 </g>
 <path d="M13.5 19.5 l8.5 8 M22 19.5 l-8.5 8" stroke="#e0e0e0" stroke-width="1.6"/>
 <path d="M11.5 54.5 l8 -8" stroke="#c8c8c8" stroke-width="3.2" stroke-linecap="round"/>
 <path d="M18 48 a5.5 5.5 0 0 1 6.5 -8.5 l-3 3 l0.5 2.5 l2.5 0.5 l3 -3 a5.5 5.5 0 0 1 -8.5 6.5z" fill="#c8c8c8"/>
</svg>

<!-- notification -->
<div class="a" style="left:1000px;top:580px;width:357px;height:70px;background:#ffffe1;border-radius:9px;border:1px solid #101010"></div>
<svg width="30" height="20" style="left:1007px;top:589px">
 <polygon points="9.5,1 18,16 1,16" fill="#f2c230" stroke="#a88818" stroke-width="0.8"/>
 <rect x="8.7" y="5.5" width="1.8" height="6" fill="#222"/><rect x="8.7" y="12.5" width="1.8" height="1.8" fill="#222"/>
</svg>
<div class="t" style="left:1035px;top:591px;font-weight:bold;color:#111;letter-spacing:-0.17px">Hardware Acceleration Disabled</div>
<div class="a" style="left:1332px;top:590px;width:16px;height:16px;background:#f2f2f2;border:1px solid #a0a0a0"></div>
<svg width="16" height="16" style="left:1332px;top:590px"><path d="M4 4 l8 8 M12 4 l-8 8" stroke="#000" stroke-width="2.2"/></svg>
<div class="t" style="left:1015px;top:613px;color:#111;letter-spacing:-0.05px">The graphics tuner has detected a problem and has turned off</div>
<div class="t" style="left:1015px;top:628px;color:#111">Hardware Acceleration.</div>

</body></html>
